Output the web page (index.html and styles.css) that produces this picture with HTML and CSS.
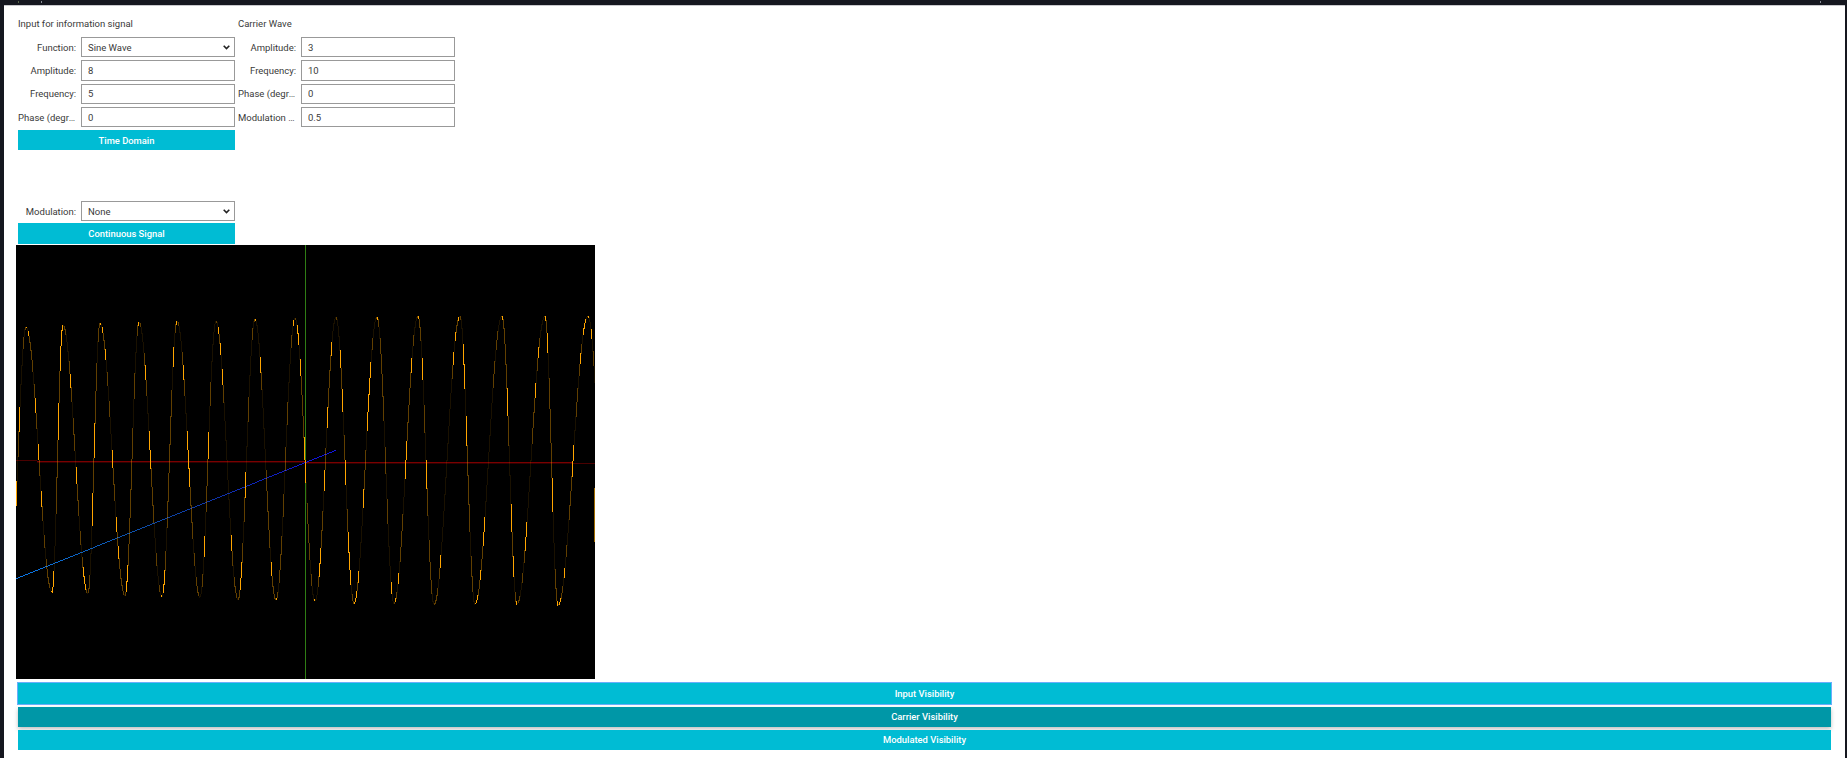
FILE: index.html
```html
<!DOCTYPE html>
<html lang="en">
<head>
    <meta charset="UTF-8" />
    <title>Signal Modulation</title>
    <link rel="stylesheet" href="styles.css">
</head>
<body>
    <div class="page">
        <!-- signal inputs -->
        <div class="panels">
            <div class="panel">
                <div class="panel-title">Input for information signal</div>
                <div class="row">
                    <label class="row-label">Function:</label>
                    <select class="field"><option>Sine Wave</option></select>
                </div>
                <div class="row">
                    <label class="row-label">Amplitude:</label>
                    <input class="field" type="text" value="8">
                </div>
                <div class="row">
                    <label class="row-label">Frequency:</label>
                    <input class="field" type="text" value="5">
                </div>
                <div class="row">
                    <label class="row-label">Phase (degrees):</label>
                    <input class="field" type="text" value="0">
                </div>
                <button class="btn">Time Domain</button>
            </div>
            <div class="panel">
                <div class="panel-title">Carrier Wave</div>
                <div class="row">
                    <label class="row-label">Amplitude:</label>
                    <input class="field" type="text" value="3">
                </div>
                <div class="row">
                    <label class="row-label">Frequency:</label>
                    <input class="field" type="text" value="10">
                </div>
                <div class="row">
                    <label class="row-label">Phase (degrees):</label>
                    <input class="field" type="text" value="0">
                </div>
                <div class="row">
                    <label class="row-label">Modulation index:</label>
                    <input class="field" type="text" value="0.5">
                </div>
            </div>
        </div>

        <!-- modulation -->
        <div class="panel modulation">
            <div class="row">
                <label class="row-label">Modulation:</label>
                <select class="field"><option>None</option></select>
            </div>
            <button class="btn">Continuous Signal</button>
        </div>

        <canvas id="plot" class="plot" width="579" height="434"></canvas>

        <!-- visibility toggles -->
        <div class="toggles">
            <button class="btn btn-wide btn-focus">Input Visibility</button>
            <button class="btn btn-wide btn-hover">Carrier Visibility</button>
            <button class="btn btn-wide">Modulated Visibility</button>
        </div>
    </div>
    <script src="chart.js"></script>
</body>
</html>
```
FILE: styles.css
```css
:root {
    --cyan: #00bcd4;
    --cyan-dark: #0097a7;
    --frame: #15171f;
    --text-base: #3a3a3a;
}

* {
    box-sizing: border-box;
}

body {
    margin: 0;
    height: 758px;
    overflow: hidden;
    background: var(--frame);
    padding: 5px 2px 0 4px;
    font-family: Roboto, Arial, sans-serif;
    font-size: 9.5px;
    color: var(--text-base);
}

/* specks of the window title bar above the page */
body::before {
    content: "";
    position: absolute;
    top: 1px;
    left: 18px;
    width: 1px;
    height: 2px;
    background: #59664a;
    box-shadow: 23px 0 #8a8f98, 1802px 0 #8a8f98;
}

.page {
    height: 753px;
    background: #fff;
    border-top: 1px solid #c9c9cd;
    padding: 11px 13px 0 12px;
}

/* ====== Controls ====== */
.panels {
    display: flex;
    gap: 3px;
    height: 182.5px;
}
.panel {
    width: 217px;
    margin-left: 2px;
}
.panels .panel + .panel {
    margin-left: 0;
}
.panel-title {
    height: 18.5px;
    line-height: 13px;
}
.row {
    display: flex;
    align-items: center;
    gap: 5px;
    height: 23.33px;
}
.row-label {
    width: 58px;
    flex: none;
    text-align: right;
    white-space: nowrap;
    overflow: hidden;
    text-overflow: ellipsis;
}
.field {
    width: 154px;
    height: 20.33px;
    flex: none;
    border: 1px solid #999;
    border-radius: 0;
    background: #fff;
    padding: 0 6px;
    font: inherit;
    color: var(--text-base);
    outline: none;
}
select.field {
    appearance: none;
    padding: 0 6px;
    background: #fff url("data:image/svg+xml,%3Csvg xmlns='http://www.w3.org/2000/svg' width='7' height='5'%3E%3Cpath d='M.7.8l2.8 2.8L6.3.8' fill='none' stroke='%23222' stroke-width='1.6'/%3E%3C/svg%3E") no-repeat right 4px center;
}

/* ====== Buttons ====== */
.btn {
    display: block;
    width: 100%;
    height: 20px;
    margin: 0;
    padding: 0;
    border: none;
    background: var(--cyan);
    color: #fff;
    font: 500 9.4px Roboto, Arial, sans-serif;
}
.panel .btn {
    margin-top: 1.2px;
}
.modulation .btn {
    height: 21px;
    margin-top: 0;
}

/* ====== Plot ====== */
.plot {
    display: block;
    width: 579px;
    height: 434px;
    margin-top: 1.17px;
    background: #000;
}

.toggles {
    display: flex;
    flex-direction: column;
    gap: 2px;
    margin-top: 3px;
}
.btn-wide {
    margin-left: 2px;
    width: 1813px;
}
.btn-focus {
    height: 23px;
    width: 1815px;
    margin-left: 1px;
    border: 1px solid #6aaefc;
}
.btn-hover {
    margin-bottom: 1px;
    background: var(--cyan-dark);
    box-shadow: 0 2px 4px rgba(0, 0, 0, 0.25);
}
```
FILE: chart.js
```js
/* plot canvas, page offset is 16,245 */
const ctx = document.getElementById('plot').getContext('2d');
const OX = 16, OY = 245;

/* turning points of the wave read in page coordinates */
const turning = [
    [10, 585], [26, 327], [52, 592], [63, 325], [88, 593], [100, 323], [125, 595], [139, 322],
    [162, 596], [177, 321], [200, 597], [216, 321], [238, 599], [255, 319], [276, 600], [295, 318],
    [315, 601], [336, 317], [354, 603], [377, 317], [394, 603], [418, 316], [434, 604], [460, 316],
    [475, 604], [502, 316], [517, 604], [545, 316], [558, 605], [588, 316], [610, 606]
];

function waveY(x) {
    for (let i = 0; i < turning.length - 1; i++) {
        const [x0, y0] = turning[i];
        const [x1, y1] = turning[i + 1];
        if (x >= x0 && x <= x1) {
            const t = (x - x0) / (x1 - x0);
            return y0 + (y1 - y0) * (1 - Math.cos(Math.PI * t)) / 2;
        }
    }
    return 460;
}

/* ====== Axes ====== */
function drawAxes() {
    ctx.fillStyle = '#4a0000';
    ctx.fillRect(0, 460 - OY, 21, 1);
    ctx.fillStyle = '#7a0000';
    ctx.fillRect(21, 461 - OY, 268, 1);
    ctx.fillRect(289, 462 - OY, 268, 1);
    ctx.fillStyle = '#300000';
    ctx.fillRect(21, 462 - OY, 268, 1);
    ctx.fillRect(289, 463 - OY, 268, 1);
    ctx.fillStyle = '#4a0000';
    ctx.fillRect(557, 463 - OY, 22, 1);

    ctx.fillStyle = '#2f7d14';
    ctx.fillRect(305 - OX, 0, 1, 434);
    ctx.fillStyle = '#a6d636';
    ctx.fillRect(305 - OX, 462 - OY, 1, 12);
}

/* ====== Blue line, one dot per step ====== */
function drawBlue() {
    const x0 = 16, y0 = 578, x1 = 335, y1 = 450;
    for (let x = x0; x <= x1; x += 1) {
        const t = (x - x0) / (x1 - x0);
        const y = y0 + (y1 - y0) * t;
        const r = 10 + 6 * t;
        const g = Math.round(120 - 100 * Math.min(t / 0.9, 1));
        const b = Math.round(235 - 70 * Math.sin(Math.PI * t));
        ctx.fillStyle = `rgb(${r},${g},${b})`;
        ctx.fillRect(x - OX, Math.round(y) - OY, 1, 1);
    }
}

/* ====== Wave, vertical runs with uneven brightness ====== */
function drawWave() {
    for (let x = 16; x < 595; x++) {
        const a = waveY(x);
        const b = waveY(x + 1);
        const top = Math.min(a, b);
        const h = Math.max(Math.abs(a - b), 1);
        const f = (top * 0.083 + x * 0.37) % 1;
        const alpha = f < 0.35 ? 0.1 : f < 0.76 ? 0.38 : 1;
        ctx.fillStyle = `rgba(255,165,0,${alpha})`;
        ctx.fillRect(x - OX, Math.round(top) - OY, 1, Math.ceil(h));
    }
    ctx.fillStyle = '#a06c00';
    ctx.fillRect(594 - OX, 488 - OY, 1, 54);
}

drawAxes();
drawBlue();
drawWave();
```
